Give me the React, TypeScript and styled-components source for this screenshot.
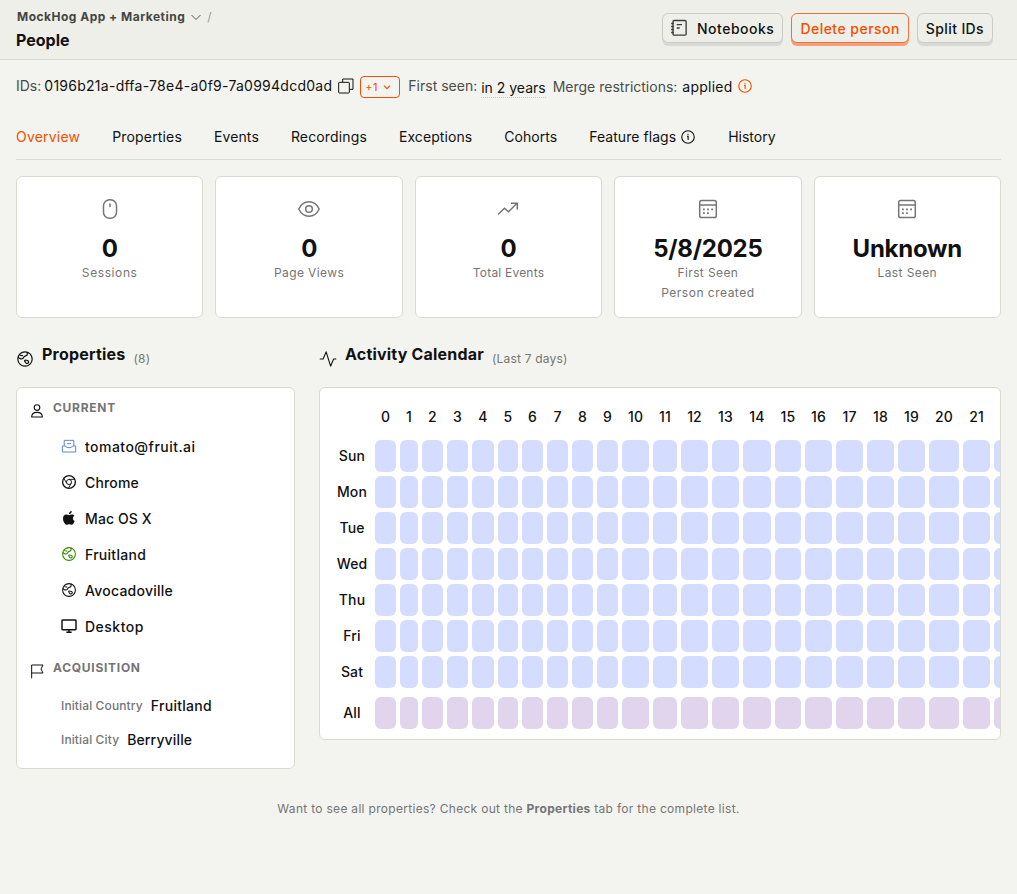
import React from 'react';
import styled, { createGlobalStyle } from 'styled-components';

const GlobalStyle = createGlobalStyle`
  *, *::before, *::after { box-sizing: border-box; }
  body {
    margin: 0;
    background: #f3f4ef;
    color: #111;
    font: 400 14px/20px Inter, "Liberation Sans", sans-serif;
  }
  button { font: inherit; color: inherit; margin: 0; cursor: pointer; }
  h1, h2, h3, p { margin: 0; }
`;

const Page = styled.div`
  min-height: 894px;
`;

const TopBar = styled.header`
  display: flex;
  justify-content: space-between;
  align-items: flex-start;
  height: 60px;
  padding: 8px 24px 0 16px;
  background: #eeefe9;
  border-bottom: 1px solid #dadbd5;
`;

const Crumb = styled.div`
  display: flex;
  align-items: center;
  height: 17px;
  padding-left: 1px;
  font-size: 12px;
  font-weight: 700;
  letter-spacing: 0.49px;
  color: #444542;
`;

const CrumbArrow = styled.span`
  display: flex;
  margin: 0 5px 0 5px;
`;

const CrumbSlash = styled.span`
  font-weight: 400;
  color: #9b9c96;
`;

const PageTitle = styled.h1`
  margin-top: 5px;
  font-size: 16px;
  line-height: 20px;
  font-weight: 700;
`;

const Actions = styled.div`
  display: flex;
  gap: 8px;
  padding-top: 5px;
`;

const ActionButton = styled.button<{ $danger?: boolean; $track: number }>`
  display: flex;
  align-items: center;
  gap: 8px;
  height: 30px;
  padding: 2px 8px 0;
  border: 1px solid ${p => (p.$danger ? '#f0703c' : '#cbcbc7')};
  border-radius: 6px;
  background: #eeefe9;
  color: ${p => (p.$danger ? '#f54e00' : '#111')};
  box-shadow: 0 3px 0 ${p => (p.$danger ? '#f29f7c' : '#d9d9d6')};
  font-weight: 500;
  letter-spacing: ${p => p.$track}px;
  white-space: nowrap;
`;

const ButtonIcon = styled.span`
  display: flex;
  margin: -2px 0 0 -1px;
  padding-right: 1px;
  color: #3c3c3a;
`;

const Content = styled.main`
  padding: 0 16px;
`;

const Details = styled.div`
  display: flex;
  align-items: center;
  height: 54px;
  white-space: nowrap;
`;

const Detail = styled.div<{ $gap: number; $lift?: boolean; $track?: number }>`
  display: flex;
  align-items: center;
  margin-right: ${p => p.$gap}px;
  margin-top: ${p => (p.$lift ? -2 : 0)}px;
  letter-spacing: ${p => p.$track ?? 0}px;
`;

const DetailLabel = styled.span<{ $gap?: number }>`
  margin-right: ${p => p.$gap ?? 4}px;
  letter-spacing: 0;
  color: #4b4c48;
`;

const CopyIcon = styled.span`
  display: flex;
  margin: 0 6px 0 6px;
`;

const MoreIds = styled.button`
  display: flex;
  align-items: center;
  justify-content: space-between;
  width: 40px;
  height: 22px;
  padding: 0 8px 0 4px;
  margin-right: 8px;
  border: 1px solid #f54e00;
  border-radius: 4px;
  background: transparent;
  color: #f54e00;
  font-size: 11px;
  letter-spacing: 0.3px;
`;

const SeenTime = styled.span`
  margin-top: 5px;
  line-height: 18px;
  border-bottom: 1px dotted #c9cac4;
`;

const Tabs = styled.nav`
  display: flex;
  gap: 32px;
  height: 46px;
  border-bottom: 1px solid #dadbd5;
`;

const Tab = styled.a<{ $active?: boolean; $track?: number }>`
  display: flex;
  align-items: center;
  gap: 4px;
  height: 46px;
  letter-spacing: ${p => p.$track ?? 0}px;
  color: ${p => (p.$active ? '#f54e00' : '#111')};
`;

const Stats = styled.section`
  display: grid;
  grid-template-columns: repeat(5, 1fr);
  gap: 12px;
  margin-top: 16px;
`;

const Card = styled.div`
  border: 1px solid #dadbd0;
  border-radius: 6px;
  background: #fff;
`;

const StatCard = styled(Card)`
  display: flex;
  flex-direction: column;
  align-items: center;
  height: 142px;
  padding-top: 20px;
  color: #757575;
  font-size: 12px;
`;

const StatValue = styled.div`
  margin-top: 12px;
  font-size: 24px;
  line-height: 32px;
  font-weight: 700;
  letter-spacing: -0.25px;
  color: #111;
`;

const StatLabel = styled.div<{ $track: number }>`
  line-height: 16px;
  letter-spacing: ${p => p.$track}px;
`;

const StatNote = styled.div`
  margin-top: 4px;
  line-height: 16px;
  letter-spacing: 0.5px;
`;

const Columns = styled.div`
  display: grid;
  grid-template-columns: 279px minmax(0, 1fr);
  align-items: start;
  gap: 24px;
  margin-top: 24px;
`;

const SectionHead = styled.div`
  display: flex;
  align-items: center;
  height: 45px;
  padding-bottom: 12px;
`;

const HeadIcon = styled.span`
  display: flex;
  margin-right: 8px;
`;

const HeadTitle = styled.h2`
  margin: -10px 8px 0 0;
  font-size: 16px;
  line-height: 24px;
  font-weight: 700;
  letter-spacing: 0.2px;
`;

const HeadNote = styled.span`
  font-size: 12px;
  letter-spacing: 0.2px;
  color: #757575;
`;

const PropsCard = styled(Card)`
  height: 382px;
  padding: 12px;
`;

const Group = styled.div`
  display: flex;
  align-items: flex-start;
  height: 20px;
`;

const GroupIcon = styled.span`
  display: flex;
  margin: 3px 8px 0 0;
`;

const GroupTitle = styled.h3`
  font-size: 12px;
  line-height: 16px;
  font-weight: 700;
  letter-spacing: 0.72px;
  color: #757575;
`;

const PropList = styled.div`
  padding: 9px 0 0 32px;
  margin-bottom: 15px;
`;

const PropRow = styled.div<{ $track: number }>`
  display: flex;
  align-items: center;
  gap: 8px;
  height: 36px;
  font-weight: 500;
  letter-spacing: ${p => p.$track}px;
`;

const PropIcon = styled.span<{ $color?: string }>`
  display: flex;
  margin-top: -3px;
  color: ${p => p.$color ?? '#111'};
`;

const InitialRow = styled(PropRow)`
  height: 34px;
`;

const InitialLabel = styled.span`
  font-size: 12px;
  letter-spacing: 0.12px;
  color: #757575;
`;

const CalendarCard = styled(Card)`
  height: 353px;
  overflow: hidden;
  padding: 12px 0 0 13px;
`;

const columnWidths = [21, 18, 21, 21, 22, 20, 21, 21, 21, 21, 27, 24, 27, 27, 28, 26, 27, 27, 27, 27, 30, 27, 30];

const CalendarRow = styled.div<{ $total?: boolean }>`
  display: grid;
  grid-template-columns: 38px ${columnWidths.map(w => `${w}px`).join(' ')};
  column-gap: 4px;
  height: 32px;
  margin-top: ${p => (p.$total ? 9 : 4)}px;
  font-weight: 500;
`;

const CalendarHead = styled(CalendarRow)`
  margin-top: 0;
  padding-top: 2px;
  margin-bottom: 8px;
`;

const Label = styled.div`
  display: flex;
  align-items: center;
  justify-content: center;
  letter-spacing: 0.15px;
`;

const Cell = styled.div<{ $total?: boolean }>`
  border-radius: 6px;
  background: ${p => (p.$total ? '#e1d4ed' : '#d4dcff')};
`;

const Footer = styled.p`
  margin-top: 32px;
  text-align: center;
  font-size: 12px;
  line-height: 16px;
  letter-spacing: 0.3px;
  color: #757575;
`;

type IconProps = { size?: number; children: React.ReactNode; width?: number };

const Icon = ({ size = 16, width = 1.5, children }: IconProps) => (
  <svg width={size} height={size} viewBox="0 0 24 24" fill="none" stroke="currentColor" strokeWidth={width}>
    {children}
  </svg>
);

const InfoIcon = () => (
  <Icon width={1.7}>
    <circle cx="12" cy="12" r="9.4" />
    <path d="M10.5 11h1.7v5.5" />
    <circle cx="12" cy="8" r="1" fill="currentColor" stroke="none" />
  </Icon>
);

const GlobeIcon = ({ size = 16 }: { size?: number }) => (
  <Icon size={size} width={1.6}>
    <circle cx="12" cy="12" r="9.600" />
    <path d="M2.800 9.500c2.200 2.600 5 3 6.600 1.500 1-1 .8-2 2.300-2.700 1.800-.8 3-.8 3.400-2.300.2-1 0-2-.6-3M5 6.500c1.800 1.300 3 1.200 4.300.8" />
    <path d="M11.600 13.800c1-.8 2-.2 3 .1 1.500.3 2.600 1.300 2.300 2.500-.3 1.300-1.700 1.800-3 1.400-1.200-.4-1.100-1.200-1.600-2-.5-.7-1.400-1.300-.7-2z" />
  </Icon>
);

const ChevronIcon = ({ size, width }: { size: number; width: number }) => (
  <Icon size={size} width={width}>
    <path d="M3 8l9 9 9-9" />
  </Icon>
);

const NotebookIcon = () => (
  <Icon size={18} width={1.8}>
    <rect x="4" y="2" width="17.500" height="19.500" rx="1.500" />
    <path d="M1.500 6h3.500M1.500 10h3.500M1.500 14h3.500M1.500 18h3.500M9 7.500h7M9 12h4" />
  </Icon>
);

const CalendarIcon = () => (
  <Icon size={24}>
    <rect x="3.700" y="3.500" width="16.600" height="17" rx="1.800" />
    <path d="M4 8h16" />
    <path d="M7 12.400h1.800M11.100 12.400h1.800M15.200 12.400H17M7 16.200h1.800M11.100 16.200h1.800" strokeWidth="1.800" />
  </Icon>
);

const stats = [
  {
    value: '0',
    label: 'Sessions',
    track: 0.6,
    icon: (
      <Icon size={24}>
        <rect x="5.500" y="2.700" width="13" height="18.600" rx="6" />
        <path d="M12 6.500V10" />
      </Icon>
    ),
  },
  {
    value: '0',
    label: 'Page Views',
    track: 0.4,
    icon: (
      <Icon size={24}>
        <path d="M1.800 12C4 7.300 7.800 4.800 12 4.800S20 7.300 22.200 12C20 16.700 16.200 19.200 12 19.200S4 16.700 1.800 12z" />
        <circle cx="12" cy="12" r="3.300" />
      </Icon>
    ),
  },
  {
    value: '0',
    label: 'Total Events',
    track: 0.2,
    icon: (
      <Icon size={24}>
        <path d="M2 17.500l6.500-6.300 4 3.600 8.500-8.500M15 6.200h6.300v6.200" />
      </Icon>
    ),
  },
  { value: '5/8/2025', label: 'First Seen', track: 0.4, note: 'Person created', icon: <CalendarIcon /> },
  { value: 'Unknown', label: 'Last Seen', track: 0.4, icon: <CalendarIcon /> },
];

const properties = [
  {
    text: 'tomato@fruit.ai',
    track: 0.47,
    color: '#5b84dc',
    icon: (
      <Icon>
        <path d="M4.800 12V3.500h14.400V12M2 12h4.500c1.200 2 3 2.500 5.500 2.500s4.300-.5 5.500-2.500H22v9H2zM9 8.500h6" />
      </Icon>
    ),
  },
  {
    text: 'Chrome',
    track: 0.15,
    icon: (
      <Icon width={2}>
        <circle cx="12" cy="12" r="9.600" />
        <circle cx="12" cy="12" r="3.800" strokeWidth="1.400" />
        <path d="M12 8h8.600M8.700 14L4.300 6.500M15.300 14l-4.200 7.500" strokeWidth="1.400" />
      </Icon>
    ),
  },
  {
    text: 'Mac OS X',
    track: 0.1,
    icon: (
      <Icon>
        <path
          fill="currentColor"
          stroke="none"
          d="M16.200 1.500c.2 2.700-2 5-4.500 5C11.500 4 13.700 1.700 16.200 1.500zM20.500 16.500c-.7 2.200-2.700 5.700-4.700 5.800-1.400 0-1.900-.8-3.500-.8s-2.100.8-3.500.8C6 22.300 3 16.800 3 12.700c0-3.700 2.300-5.800 4.800-5.800 1.600 0 2.900 1 4.200 1 1.200 0 2.700-1.100 4.600-1.100 1.200 0 2.700.7 3.600 2-3.400 2.100-2.800 6.500.3 7.700z"
        />
      </Icon>
    ),
  },
  { text: 'Fruitland', track: 0.28, color: '#388600', icon: <GlobeIcon /> },
  { text: 'Avocadoville', track: 0.24, icon: <GlobeIcon /> },
  {
    text: 'Desktop',
    track: 0.5,
    icon: (
      <Icon width={2.2}>
        <rect x="1.500" y="3" width="21" height="14.500" rx="1" />
        <path d="M12 18v3M8 21.500h8" />
      </Icon>
    ),
  },
];

const initial = [
  { label: 'Initial Country', value: 'Fruitland', track: 0.3 },
  { label: 'Initial City', value: 'Berryville', track: 0.15 },
];

const days = ['Sun', 'Mon', 'Tue', 'Wed', 'Thu', 'Fri', 'Sat', 'All'];
const hours = columnWidths.map((_, hour) => hour);
const visibleHours = hours.slice(0, 22);

const tabs = [
  { name: 'Properties', track: 0.17 },
  { name: 'Events', track: 0.1 },
  { name: 'Recordings', track: 0.14 },
  { name: 'Exceptions', track: 0.08 },
  { name: 'Cohorts', track: 0.05 },
];

export default function App() {
  return (
    <Page>
      <GlobalStyle />
      <TopBar>
        <div>
          <Crumb>
            MockHog App + Marketing
            <CrumbArrow><ChevronIcon size={12} width={1.8} /></CrumbArrow>
            <CrumbSlash>/</CrumbSlash>
          </Crumb>
          <PageTitle>People</PageTitle>
        </div>
        <Actions>
          <ActionButton $track={0.5}>
            <ButtonIcon><NotebookIcon /></ButtonIcon>
            Notebooks
          </ActionButton>
          <ActionButton $danger $track={0.47}>Delete person</ActionButton>
          <ActionButton $track={0.38}>Split IDs</ActionButton>
        </Actions>
      </TopBar>
      <Content>
        <Details>
          <Detail $gap={0} $lift $track={0.26}>
            <DetailLabel $gap={3}>IDs:</DetailLabel>
            0196b21a-dffa-78e4-a0f9-7a0994dcd0ad
            <CopyIcon>
              <Icon size={16}>
                <rect x="1" y="6.500" width="16" height="16" rx="1" />
                <path d="M7 6V1.500h15.500V17H17.500" />
              </Icon>
            </CopyIcon>
          </Detail>
          <MoreIds>+1<ChevronIcon size={8} width={3.5} /></MoreIds>
          <Detail $gap={7} $lift>
            <DetailLabel>First seen:</DetailLabel>
            <SeenTime>in 2 years</SeenTime>
          </Detail>
          <Detail $gap={4} $track={0.25}>
            <DetailLabel $gap={5}>Merge restrictions:</DetailLabel>
            applied
          </Detail>
          <PropIcon $color="#f54e00"><InfoIcon /></PropIcon>
        </Details>
        <Tabs>
          <Tab $active $track={0.2}>Overview</Tab>
          {tabs.map(tab => <Tab key={tab.name} $track={tab.track}>{tab.name}</Tab>)}
          <Tab $track={0.05}>Feature flags <InfoIcon /></Tab>
          <Tab>History</Tab>
        </Tabs>
        <Stats>
          {stats.map(stat => (
            <StatCard key={stat.label}>
              {stat.icon}
              <StatValue>{stat.value}</StatValue>
              <StatLabel $track={stat.track}>{stat.label}</StatLabel>
              {stat.note && <StatNote>{stat.note}</StatNote>}
            </StatCard>
          ))}
        </Stats>
        <Columns>
          <section>
            <SectionHead>
              <HeadIcon><GlobeIcon size={18} /></HeadIcon>
              <HeadTitle>Properties</HeadTitle>
              <HeadNote>(8)</HeadNote>
            </SectionHead>
            <PropsCard>
              <Group>
                <GroupIcon>
                  <Icon width={1.7}>
                    <circle cx="12" cy="6.800" r="4.200" />
                    <path d="M4 21c0-4.800 3-7 8-7s8 2.200 8 7z" />
                  </Icon>
                </GroupIcon>
                <GroupTitle>CURRENT</GroupTitle>
              </Group>
              <PropList>
                {properties.map(item => (
                  <PropRow key={item.text} $track={item.track}>
                    <PropIcon $color={item.color}>{item.icon}</PropIcon>
                    {item.text}
                  </PropRow>
                ))}
              </PropList>
              <Group>
                <GroupIcon>
                  <Icon>
                    <path d="M4 23V3h17l-3 6 3 6H4" />
                  </Icon>
                </GroupIcon>
                <GroupTitle>ACQUISITION</GroupTitle>
              </Group>
              <PropList>
                {initial.map(item => (
                  <InitialRow key={item.label} $track={item.track}>
                    <InitialLabel>{item.label}</InitialLabel>
                    {item.value}
                  </InitialRow>
                ))}
              </PropList>
            </PropsCard>
          </section>
          <section>
            <SectionHead>
              <HeadIcon>
                <Icon size={18}>
                  <path d="M1 12h4.500l4-9.500 6 19 4-9.500H23" strokeLinejoin="round" />
                </Icon>
              </HeadIcon>
              <HeadTitle>Activity Calendar</HeadTitle>
              <HeadNote>(Last 7 days)</HeadNote>
            </SectionHead>
            <CalendarCard>
              <CalendarHead>
                <Label />
                {visibleHours.map(hour => <Label key={hour}>{hour}</Label>)}
              </CalendarHead>
              {days.map(day => (
                <CalendarRow key={day} $total={day === 'All'}>
                  <Label>{day}</Label>
                  {hours.map(hour => <Cell key={hour} $total={day === 'All'} />)}
                </CalendarRow>
              ))}
            </CalendarCard>
          </section>
        </Columns>
        <Footer>
          Want to see all properties? Check out the <b>Properties</b> tab for the complete list.
        </Footer>
      </Content>
    </Page>
  );
}
